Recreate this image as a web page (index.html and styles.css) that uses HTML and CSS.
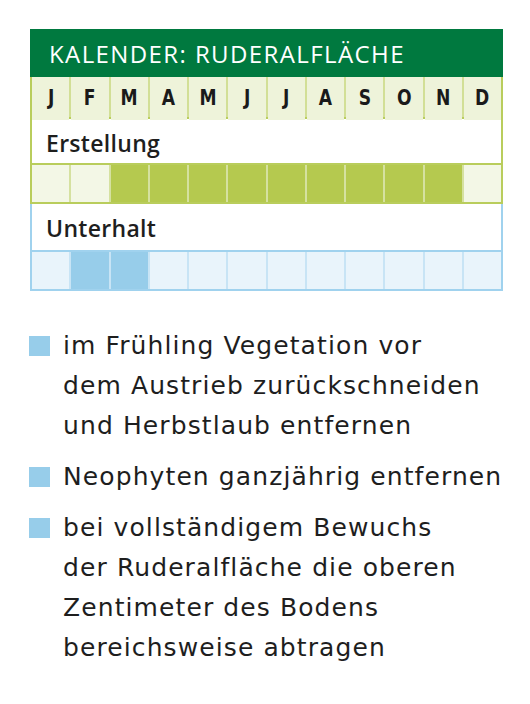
FILE: index.html
```html
<!DOCTYPE html>
<html lang="de">
<head>
    <meta charset="UTF-8">
    <meta name="viewport" content="width=device-width, initial-scale=1.0">
    <title>Kalender: Ruderalfläche</title>
    <link rel="stylesheet" href="styles.css">
</head>
<body>
    <div class="page">
        <!-- Kalender-Tabelle -->
        <div class="kalender">
            <div class="kopf">KALENDER: RUDERALFLÄCHE</div>

            <div class="monate">
                <span><b>J</b></span><span><b>F</b></span><span><b>M</b></span><span><b>A</b></span>
                <span><b>M</b></span><span><b>J</b></span><span><b>J</b></span><span><b>A</b></span>
                <span><b>S</b></span><span><b>O</b></span><span><b>N</b></span><span><b>D</b></span>
            </div>

            <div class="abschnitt gruen">
                <div class="titel">Erstellung</div>
                <div class="balken">
                    <span></span><span></span><span class="an"></span><span class="an"></span>
                    <span class="an"></span><span class="an"></span><span class="an"></span><span class="an"></span>
                    <span class="an"></span><span class="an"></span><span class="an"></span><span></span>
                </div>
            </div>

            <div class="abschnitt blau">
                <div class="titel">Unterhalt</div>
                <div class="balken">
                    <span></span><span class="an"></span><span class="an"></span><span></span>
                    <span></span><span></span><span></span><span></span>
                    <span></span><span></span><span></span><span></span>
                </div>
            </div>
        </div>

        <!-- Legende -->
        <ul class="legende">
            <li>im Frühling Vegetation vor<br>dem Austrieb zurückschneiden<br>und Herbstlaub entfernen</li>
            <li>Neophyten ganzjährig entfernen</li>
            <li>bei vollständigem Bewuchs<br>der Ruderalfläche die oberen<br>Zentimeter des Bodens<br>bereichsweise abtragen</li>
        </ul>
    </div>
</body>
</html>
```

FILE: styles.css
```css
body {
    margin: 0;
    background-color: #fff;
    font-family: "Open Sans", "DejaVu Sans", sans-serif;
    color: #1e1e1e;
}

.page {
    padding: 29px 27px 0 30px;
}

.kalender {
    width: 473px;
}

/* Grüner Titelbalken */
.kopf {
    background-color: #00793f;
    color: #fff;
    height: 48px;
    line-height: 50px;
    padding-left: 19px;
    font-size: 24px;
    letter-spacing: 1.4px;
}

/* Monatszeile */
.monate {
    display: grid;
    grid-template-columns: repeat(12, 1fr);
    gap: 2px;
    background-color: #d2df96;
    border: 2px solid #b9cd5c;
    border-top: 0;
    border-bottom: 0;
    height: 40px;
}

.monate span {
    background-color: #eef3da;
    text-align: center;
    line-height: 42px;
}

/* Schmale, fette Buchstaben */
.monate b {
    display: inline-block;
    transform: scaleX(0.78);
    font-family: "DejaVu Sans", sans-serif;
    font-weight: bold;
    font-size: 22px;
    color: #1a1a1a;
}

.abschnitt {
    border-left: 2px solid;
    border-right: 2px solid;
}

.titel {
    height: 46px;
    line-height: 48px;
    padding-left: 14px;
    font-size: 23px;
    font-weight: 600;
    letter-spacing: 0.3px;
}

.balken {
    display: grid;
    grid-template-columns: repeat(12, 1fr);
    gap: 2px;
    height: 37px;
    border-top: 2px solid;
    border-bottom: 2px solid;
}

.gruen {
    border-color: #b9cd5c;
}

.gruen .titel {
    border-top: 2px solid #b9cd5c;
    height: 44px;
}

.gruen .balken {
    border-color: #b9cd5c;
    background-color: #d5e1a0;
}

.gruen .balken span {
    background-color: #f3f7e6;
}

.gruen .balken span.an {
    background-color: #b5c94f;
}

.blau {
    border-color: #a0d2ee;
}

.blau .balken {
    border-color: #a0d2ee;
    background-color: #c8e4f5;
}

.blau .balken span {
    background-color: #e9f4fb;
}

.blau .balken span.an {
    background-color: #97cdea;
}

/* Legende mit blauen Quadraten */
.legende {
    list-style: none;
    margin: 35px 0 0;
    padding: 0;
    font-family: "DejaVu Sans", sans-serif;
}

.legende li {
    position: relative;
    padding-left: 33px;
    margin-bottom: 11px;
    font-size: 25px;
    line-height: 40px;
    letter-spacing: 1.1px;
}

.legende li::before {
    content: "";
    position: absolute;
    left: -1px;
    top: 10px;
    width: 21px;
    height: 20px;
    background-color: #97cdea;
}
```
